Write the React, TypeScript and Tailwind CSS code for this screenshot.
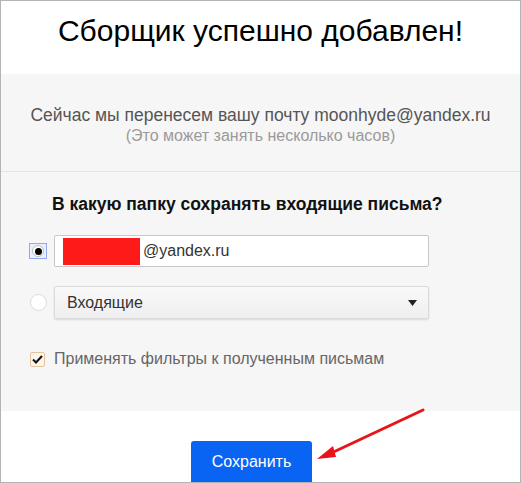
import React from "react";

const font = { fontFamily: '"Liberation Sans", Arial, sans-serif' };

const Radio = ({ checked }: { checked?: boolean }) =>
    checked ? (
        <div className="w-[18px] h-[16px] border border-[#8fa9ec] bg-[#e9efff] flex items-center justify-center">
            <div className="w-[12px] h-[12px] rounded-full bg-white border border-[#bbb] flex items-center justify-center">
                <div className="w-[7px] h-[7px] rounded-full bg-black" />
            </div>
        </div>
    ) : (
        <div className="w-[18px] h-[16px] flex items-center justify-center">
            <div className="w-[17px] h-[17px] rounded-full bg-white border border-[#dcdcdc]" />
        </div>
    );

export default function App() {
    return (
        <div
            className="relative w-[521px] h-[483px] overflow-hidden border border-[#b4b4b4] bg-white text-black"
            style={font}
        >
            <div className="h-[73px] pt-[12px] text-center text-[30px] leading-[36px]">
                Сборщик успешно добавлен!
            </div>

            <div className="bg-[#f6f6f6] h-[98px] border-b border-[#e6e6e6] pt-[30px] text-center">
                <p className="text-[17.5px] leading-[22px] text-[#555]">
                    Сейчас мы перенесем вашу почту moonhyde@yandex.ru
                </p>
                <p className="text-[16px] leading-[20px] text-[#9a9a9a]">(Это может занять несколько часов)</p>
            </div>

            <div className="bg-[#f6f6f6] h-[239px] pt-[22px]">
                <h3 className="pl-[51px] font-bold text-[17.5px] leading-[21px] text-[#111]">
                    В какую папку сохранять входящие письма?
                </h3>

                <div className="flex items-center gap-[7px] pl-[28px] mt-[20px]">
                    <Radio checked />
                    <div className="w-[375px] h-[32px] bg-white border border-[#c8c8c8] rounded-[2px] flex items-center pl-[8px]">
                        <div className="w-[77px] h-[27px] bg-[#ff1a1a]" />
                        <span className="text-[16px] text-[#333] ml-[3px]">@yandex.ru</span>
                    </div>
                </div>

                <div className="flex items-center gap-[7px] pl-[28px] mt-[19px]">
                    <Radio />
                    <div className="relative w-[375px] h-[33px] bg-gradient-to-b from-[#f9f9f9] to-[#efefef] border border-[#dadada] rounded-[2px] shadow-[0_1px_2px_rgba(0,0,0,0.12)] flex items-center pl-[12px]">
                        <span className="text-[16px] text-[#333]">Входящие</span>
                        <svg className="absolute right-[11px] top-[13px]" width="9" height="7" viewBox="0 0 9 7">
                            <path d="M0 0 H9 L4.5 6 Z" fill="#222" />
                        </svg>
                    </div>
                </div>

                <div className="flex items-center gap-[9px] pl-[29px] mt-[28px]">
                    <div className="w-[15px] h-[15px] rounded-[2px] border border-[#e3c59c] bg-[#fdf5ea] flex items-center justify-center">
                        <svg width="11" height="9" viewBox="0 0 11 9">
                            <path d="M1 4.5 L4 7.5 L10 1" fill="none" stroke="#111" strokeWidth="2" />
                        </svg>
                    </div>
                    <span className="text-[16px] text-[#666]">Применять фильтры к полученным письмам</span>
                </div>
            </div>

            <div className="pt-[30px] pl-[190px]">
                <button className="w-[121px] h-[44px] rounded-[3px] bg-[#0964f4] text-white text-[16px] pb-[2px]">
                    Сохранить
                </button>
            </div>

            <svg className="absolute left-[310px] top-[404px]" width="120" height="60" viewBox="0 0 120 60">
                <path d="M112 5 L14 51" stroke="#e8141a" strokeWidth="3" strokeLinecap="round" />
                <path d="M6 54 L22 41 L25 52 Z" fill="#e8141a" />
            </svg>
        </div>
    );
}
